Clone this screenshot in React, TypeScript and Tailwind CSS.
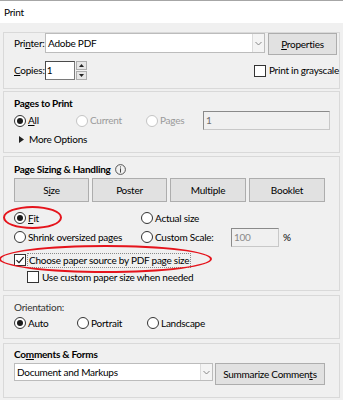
import React from "react";

function Radio({ checked = false, disabled = false }: { checked?: boolean; disabled?: boolean }) {
  return (
    <span
      className={`flex h-[12px] w-[12px] shrink-0 items-center justify-center rounded-full border bg-white ${
        disabled ? "border-[#c4c4c4]" : "border-[#333333]"
      }`}
    >
      {checked && <span className="h-[6px] w-[6px] rounded-full bg-[#1a1a1a]" />}
    </span>
  );
}

function Check({ checked = false }: { checked?: boolean }) {
  return (
    <span className="flex h-[12px] w-[12px] shrink-0 items-center justify-center border border-[#333333] bg-white">
      {checked && (
        <svg width="10" height="10" viewBox="0 0 10 10">
          <path d="M1.5 5.2 L4 7.7 L8.6 2.2" fill="none" stroke="#1a1a1a" strokeWidth="1.2" />
        </svg>
      )}
    </span>
  );
}

function Btn({ children, className = "" }: { children: React.ReactNode; className?: string }) {
  return (
    <div
      className={`flex items-center justify-center whitespace-nowrap border border-[#adadad] bg-[#e1e1e1] text-black ${className}`}
    >
      {children}
    </div>
  );
}

function Chevron() {
  return (
    <svg width="7" height="5" viewBox="0 0 7 5">
      <path d="M0.5 1 L3.5 4 L6.5 1" fill="none" stroke="#7a7a7a" strokeWidth="0.9" />
    </svg>
  );
}

export default function App() {
  return (
    <div className="relative h-[400px] w-[343px] overflow-hidden bg-[#f0f0f0] font-['Lato',sans-serif] text-[10px] leading-[13px] tracking-[-0.25px] text-black">
      {/* Title bar */}
      <div className="flex h-[23px] items-center border-t border-[#a6a6a6] bg-white pl-[4px]">Print</div>

      {/* Printer */}
      <div className="mx-[3px] mt-[9px] border border-[#d9d9d9] pb-[8px] pl-[10px]">
        <div className="flex h-[22px] items-start">
          <div className="flex h-[20px] w-[31px] shrink-0 items-center whitespace-nowrap">
            Pri<span className="underline">n</span>ter:
          </div>
          <div className="flex h-[20px] w-[220px] border border-[#bcbcbc] bg-white">
            <div className="flex flex-1 items-center pl-[2px]">Adobe PDF</div>
            <div className="flex w-[12px] items-center justify-center border-l border-[#dcdcdc] bg-[#f4f4f4]">
              <Chevron />
            </div>
          </div>
          <Btn className="ml-[3px] h-[22px] w-[69px]">
            <span>
              <span className="underline">P</span>roperties
            </span>
          </Btn>
        </div>
        <div className="mt-[6px] flex h-[19px] items-center">
          <div className="w-[33px] whitespace-nowrap">
            <span className="underline">C</span>opies:
          </div>
          <div className="flex h-[19px] w-[34px] items-center border border-[#7a7a7a] border-l-[#4a4a4a] border-t-[#4a4a4a] bg-white pl-[1px]">
            1
          </div>
          <div className="ml-[1px] flex h-[19px] w-[12px] flex-col gap-[1px]">
            <div className="flex flex-1 items-center justify-center border border-[#adadad] bg-[#e6e6e6]">
              <svg width="5" height="3" viewBox="0 0 5 3">
                <path d="M0 3 L2.5 0 L5 3 Z" fill="#222" />
              </svg>
            </div>
            <div className="flex flex-1 items-center justify-center border border-[#adadad] bg-[#e6e6e6]">
              <svg width="5" height="3" viewBox="0 0 5 3">
                <path d="M0 0 L2.5 3 L5 0 Z" fill="#222" />
              </svg>
            </div>
          </div>
          <div className="ml-[167px] flex items-center gap-[3px] whitespace-nowrap">
            <Check />
            <span>Print in grayscale</span>
          </div>
        </div>
      </div>

      {/* Pages to Print */}
      <div className="mx-[3px] mt-[2px] border border-[#d9d9d9] pb-[6px] pl-[10px] pt-[4px]">
        <div className="flex h-[14px] items-center font-bold">Pages to Print</div>
        <div className="mt-[1px] flex h-[19px] items-center">
          <div className="flex w-[62px] items-center gap-[2px]">
            <Radio checked />
            <span>
              <span className="underline">A</span>ll
            </span>
          </div>
          <div className="flex w-[70px] items-center gap-[2px] text-[#9a9a9a]">
            <Radio disabled />
            <span>Current</span>
          </div>
          <div className="flex w-[57px] items-center gap-[2px] text-[#9a9a9a]">
            <Radio disabled />
            <span>Pages</span>
          </div>
          <div className="flex h-[19px] w-[127px] items-center border border-[#c8c8c8] border-l-[#8a8a8a] border-t-[#8a8a8a] bg-[#f0f0f0] pl-[2px] text-[#6d6d6d]">
            1
          </div>
        </div>
        <div className="mt-[2px] flex h-[14px] items-center gap-[5px] pl-[5px]">
          <svg width="5" height="7" viewBox="0 0 5 7">
            <path d="M0 0 L5 3.5 L0 7 Z" fill="#222" />
          </svg>
          <span>More Options</span>
        </div>
      </div>

      {/* Page Sizing & Handling */}
      <div className="mx-[3px] mt-[3px] border border-[#d9d9d9] pb-[5px] pl-[10px] pt-[5px]">
        <div className="flex h-[14px] items-center gap-[4px]">
          <span className="font-bold">Page Sizing &amp; Handling</span>
          <svg width="11" height="11" viewBox="0 0 11 11">
            <circle cx="5.5" cy="5.5" r="4.9" fill="none" stroke="#444" strokeWidth="0.9" />
            <rect x="5" y="2.4" width="1" height="1.1" fill="#444" />
            <rect x="5" y="4.4" width="1" height="4.2" fill="#444" />
          </svg>
        </div>
        <div className="mt-[2px] flex h-[24px] gap-[3px]">
          <Btn className="w-[75px]">
            <span>
              S<span className="underline">i</span>ze
            </span>
          </Btn>
          <Btn className="w-[75px]">Poster</Btn>
          <Btn className="w-[76px]">Multiple</Btn>
          <Btn className="w-[76px]">Booklet</Btn>
        </div>
        <div className="mt-[8px] flex h-[16px] items-center">
          <div className="flex w-[127px] items-center gap-[2px]">
            <Radio checked />
            <span>
              <span className="underline">F</span>it
            </span>
          </div>
          <div className="flex items-center gap-[2px]">
            <Radio />
            <span>Actual size</span>
          </div>
        </div>
        <div className="mt-[3px] flex h-[16px] items-center">
          <div className="flex w-[127px] items-center gap-[2px] whitespace-nowrap">
            <Radio />
            <span>Shrink oversized pages</span>
          </div>
          <div className="flex w-[90px] items-center gap-[2px] whitespace-nowrap">
            <Radio />
            <span>Custom Scale:</span>
          </div>
          <div className="flex h-[19px] w-[48px] shrink-0 items-center border border-[#c8c8c8] border-l-[#8a8a8a] border-t-[#8a8a8a] bg-[#f0f0f0] pl-[2px] text-[#8a8a8a]">
            100
          </div>
          <span className="ml-[4px]">%</span>
        </div>
        <div className="mt-[7px] flex h-[16px] items-center gap-[1px]">
          <Check checked />
          <span className="whitespace-nowrap border border-dotted border-[#8a8a8a] px-[1px] leading-[13px]">
            Choose paper source by PDF page size
          </span>
        </div>
        <div className="mt-[1px] flex h-[16px] items-center gap-[3px] pl-[13px]">
          <Check />
          <span className="whitespace-nowrap">Use custom paper size when needed</span>
        </div>
      </div>

      {/* Orientation */}
      <div className="mx-[3px] mt-[4px] border border-[#d9d9d9] pb-[7px] pl-[10px] pt-[4px]">
        <div className="flex h-[14px] items-center text-[#333]">Orientation:</div>
        <div className="mt-[1px] flex h-[16px] items-center">
          <div className="flex w-[63px] items-center gap-[2px]">
            <Radio checked />
            <span>Auto</span>
          </div>
          <div className="flex w-[70px] items-center gap-[2px]">
            <Radio />
            <span>Portrait</span>
          </div>
          <div className="flex items-center gap-[2px]">
            <Radio />
            <span>Landscape</span>
          </div>
        </div>
      </div>

      {/* Comments & Forms */}
      <div className="mx-[3px] mt-[4px] border border-[#d9d9d9] pb-[12px] pl-[10px] pt-[3px]">
        <div className="flex h-[14px] items-center font-bold">
          <span>
            Co<span className="underline">m</span>ments &amp; Forms
          </span>
        </div>
        <div className="mt-[2px] flex h-[22px] items-start">
          <div className="flex h-[18px] w-[199px] border border-[#bcbcbc] bg-white">
            <div className="flex flex-1 items-center pl-[2px]">Document and Markups</div>
            <div className="flex w-[12px] items-center justify-center border-l border-[#dcdcdc] bg-[#f4f4f4]">
              <Chevron />
            </div>
          </div>
          <Btn className="ml-[2px] h-[22px] w-[110px]">
            <span>
              Summarize Commen<span className="underline">t</span>s
            </span>
          </Btn>
        </div>
      </div>

      {/* Red annotation ellipses */}
      <div className="pointer-events-none absolute left-[3px] top-[206px] h-[23px] w-[59px] rounded-[50%] border-2 border-[#e5141c]" />
      <div className="pointer-events-none absolute left-[-1px] top-[245px] h-[28px] w-[213px] rounded-[50%] border-2 border-[#e5141c]" />
    </div>
  );
}
